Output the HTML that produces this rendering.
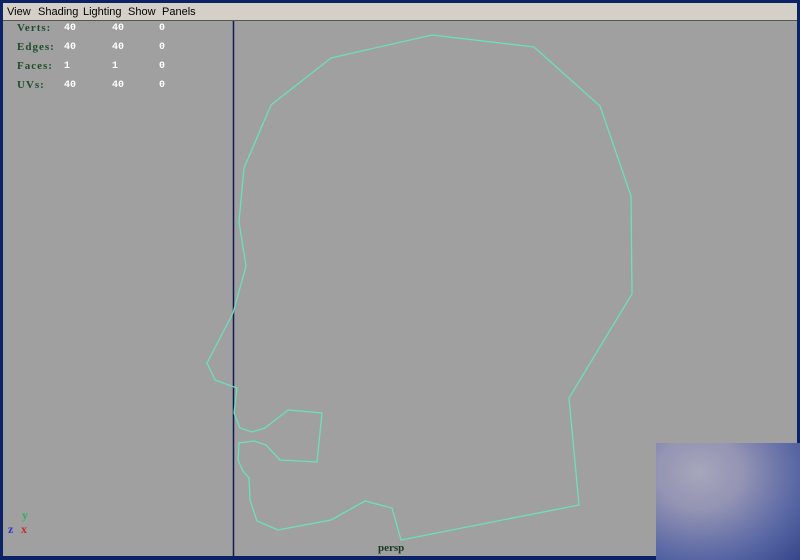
<!DOCTYPE html>
<html><head><style>
body{margin:0;width:800px;height:560px;overflow:hidden;background:#0c2266;position:relative;font-family:"Liberation Sans",sans-serif}
#menu{position:absolute;left:3px;top:3px;width:794px;height:17px;background:#d4d0c8;border-bottom:1px solid #555}
#menu span{position:absolute;top:3px;font-size:11px;color:#000}
#vp{position:absolute;left:3px;top:21px;width:794px;height:535px;background:#a0a0a0}
.st{position:absolute;font:bold 10px "Liberation Mono",monospace;color:#fff}
.lb{color:#1f4d2a;font-family:"Liberation Serif",serif;font-size:11px;letter-spacing:1px}
#grad{position:absolute;left:656px;top:443px;width:144px;height:117px;background:radial-gradient(ellipse at 30% 25%,#a6a6bc 0%,#9494b4 30%,#5866a4 70%,#34468a 100%)}
</style></head><body>
<div id="menu">
<span style="left:4px">View</span><span style="left:35px">Shading</span><span style="left:80px">Lighting</span><span style="left:125px">Show</span><span style="left:159px">Panels</span>
</div>
<div id="vp"></div>
<div class="st" style="left:17px;top:22px"><span class="lb">Verts:</span></div>
<div class="st" style="left:17px;top:41px"><span class="lb">Edges:</span></div>
<div class="st" style="left:17px;top:60px"><span class="lb">Faces:</span></div>
<div class="st" style="left:17px;top:79px"><span class="lb">UVs:</span></div>
<div class="st" style="left:64px;top:23px">40</div><div class="st" style="left:112px;top:23px">40</div><div class="st" style="left:159px;top:23px">0</div>
<div class="st" style="left:64px;top:42px">40</div><div class="st" style="left:112px;top:42px">40</div><div class="st" style="left:159px;top:42px">0</div>
<div class="st" style="left:64px;top:61px">1</div><div class="st" style="left:112px;top:61px">1</div><div class="st" style="left:159px;top:61px">0</div>
<div class="st" style="left:64px;top:80px">40</div><div class="st" style="left:112px;top:80px">40</div><div class="st" style="left:159px;top:80px">0</div>
<svg style="position:absolute;left:0;top:0" width="800" height="560">
<line x1="233.5" y1="21" x2="233.5" y2="556" stroke="#101a50" stroke-width="1.5"/>
<polyline fill="none" stroke="#6ce0b8" stroke-width="1.3" points="331,58 432,35 534,47 600,106 631,196 632,294 569,398 579,505 401,540 392,508 365,501 331,520 278,530 257,521 250,500 249,478 243,471 238,460 239,443 254,441 266,445 280,460 317,462 322,413 288,410 265,428 252,432 240,428 234,413 237,388 215,380 207,363 233,313 246,266 239,222 244,168 271,105 331,58"/>
<text x="22" y="519" font-family="Liberation Serif,serif" font-weight="bold" font-size="12" fill="#2cb05a">y</text>
<text x="8" y="533" font-family="Liberation Serif,serif" font-weight="bold" font-size="12" fill="#2a3ad0">z</text>
<text x="21" y="533" font-family="Liberation Serif,serif" font-weight="bold" font-size="12" fill="#c03030">x</text>
<text x="378" y="551" font-family="Liberation Serif,serif" font-weight="bold" font-size="11" fill="#153a20">persp</text>
</svg>
<div id="grad"></div>
</body></html>
